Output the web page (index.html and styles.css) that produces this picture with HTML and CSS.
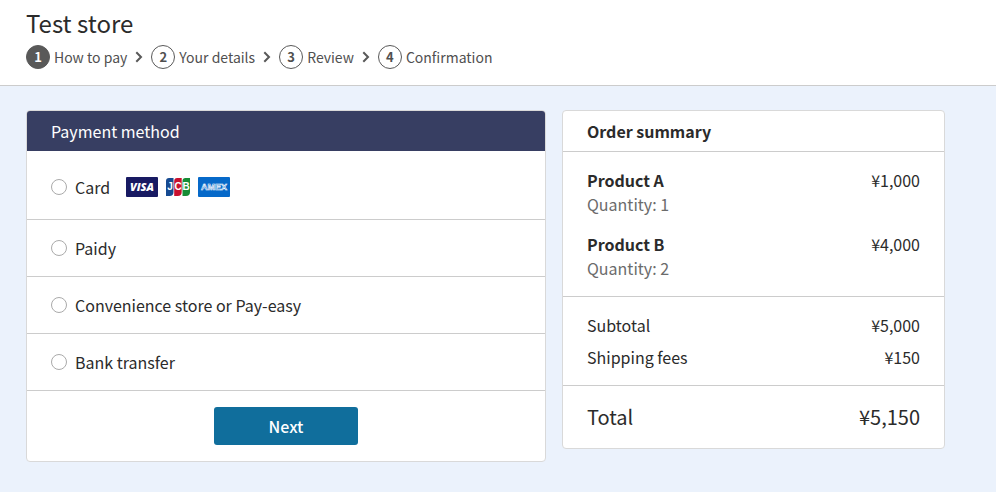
FILE: index.html
```html
<!DOCTYPE html>
<html lang="en">
<head>
<meta charset="utf-8">
<meta name="viewport" content="width=device-width, initial-scale=1">
<title>Test store</title>
<link rel="stylesheet" href="styles.css">
</head>
<body>
<header class="site-header">
  <h1 class="store-name">Test store</h1>
  <ol class="steps">
    <li class="step"><span class="step-number current">1</span><span class="step-label">How to pay</span>
      <svg class="chevron" viewBox="0 0 8 12"><path d="M1.3 1.3 6 6 1.3 10.7"/></svg></li>
    <li class="step"><span class="step-number">2</span><span class="step-label">Your details</span>
      <svg class="chevron" viewBox="0 0 8 12"><path d="M1.3 1.3 6 6 1.3 10.7"/></svg></li>
    <li class="step"><span class="step-number">3</span><span class="step-label">Review</span>
      <svg class="chevron" viewBox="0 0 8 12"><path d="M1.3 1.3 6 6 1.3 10.7"/></svg></li>
    <li class="step"><span class="step-number">4</span><span class="step-label">Confirmation</span></li>
  </ol>
</header>
<main class="checkout">
  <form class="panel">
    <h2 class="panel-title payment-title">Payment method</h2>
    <label class="option option-card"><input class="radio" type="radio" name="method"><span>Card</span>
      <span class="brands">
        <svg class="brand" viewBox="0 0 32 20" role="img" aria-label="Visa">
          <rect width="32" height="20" rx="1" fill="#181a62"/>
          <text class="visa-text" x="16" y="14" text-anchor="middle">VISA</text>
        </svg>
        <svg class="brand brand-jcb" viewBox="0 0 24 20" role="img" aria-label="JCB">
          <path d="M3 1h4.5v14a4 4 0 0 1-4 4H0V4a3 3 0 0 1 3-3z" fill="#164a91"/>
          <path d="M11.2 1h4.5v14a4 4 0 0 1-4 4H8.2V4a3 3 0 0 1 3-3z" fill="#c8102e"/>
          <path d="M19.5 1H24v14a4 4 0 0 1-4 4h-3.5V4a3 3 0 0 1 3-3z" fill="#168c35"/>
          <text class="jcb-text" x="4" y="13.4" text-anchor="middle">J</text>
          <text class="jcb-text" x="12" y="13.4" text-anchor="middle">C</text>
          <text class="jcb-text" x="20" y="13.4" text-anchor="middle">B</text>
        </svg>
        <svg class="brand" viewBox="0 0 32 20" role="img" aria-label="American Express">
          <rect width="32" height="20" rx="1" fill="#0669c9"/>
          <text class="amex-text" x="16" y="13" text-anchor="middle">AMEX</text>
        </svg>
      </span>
    </label>
    <label class="option"><input class="radio" type="radio" name="method"><span>Paidy</span></label>
    <label class="option"><input class="radio" type="radio" name="method"><span>Convenience store or Pay-easy</span></label>
    <label class="option"><input class="radio" type="radio" name="method"><span>Bank transfer</span></label>
    <div class="actions"><button class="next" type="button">Next</button></div>
  </form>
  <section class="panel">
    <h2 class="panel-title summary-title">Order summary</h2>
    <div class="group products">
      <div class="row"><div><h3 class="product-name">Product A</h3><p class="quantity">Quantity: 1</p></div><span>¥1,000</span></div>
      <div class="row"><div><h3 class="product-name">Product B</h3><p class="quantity">Quantity: 2</p></div><span>¥4,000</span></div>
    </div>
    <div class="group costs">
      <div class="row"><span>Subtotal</span><span>¥5,000</span></div>
      <div class="row"><span>Shipping fees</span><span>¥150</span></div>
    </div>
    <div class="group total">
      <div class="row"><span>Total</span><span>¥5,150</span></div>
    </div>
  </section>
</main>
</body>
</html>
```
FILE: styles.css
```css
* { box-sizing: border-box; }
body {
  margin: 0;
  min-height: 100vh;
  background: #ebf2fc;
  color: #2b2b2b;
  font: 400 16px/24px "Noto Sans CJK JP", "Noto Sans", sans-serif;
}
h1, h2, h3, p, ol { margin: 0; padding: 0; }
.site-header {
  background: #fff;
  border-bottom: 1px solid #ccc;
  padding: 8px 26px 16px;
}
.store-name { font-size: 24px; line-height: 30px; font-weight: 400; margin-bottom: 7px; }
.steps { display: flex; flex-wrap: wrap; gap: 8px; list-style: none; color: #505050; font-size: 14px; }
.step { display: flex; align-items: center; gap: 4px; }
.step-number {
  width: 24px;
  height: 24px;
  border: 1px solid #595959;
  border-radius: 50%;
  font-size: 13px;
  line-height: 22px;
  font-weight: 700;
  text-align: center;
}
.current { background: #595959; color: #fff; }
.chevron { width: 8px; height: 12px; margin-left: 4px; fill: none; stroke: #595959; stroke-width: 2; }
.checkout {
  display: grid;
  grid-template-columns: 520fr 383fr;
  gap: 16px;
  align-items: start;
  padding: 24px 51px 24px 26px;
}
.panel { background: #fff; border: 1px solid #d9d9d9; border-radius: 4px; overflow: hidden; }
.panel-title { font-size: 16px; line-height: 24px; padding: 8px 24px; }
.payment-title { background: #373e62; color: #fff; font-weight: 400; }
.summary-title { font-weight: 700; }
.option { display: flex; align-items: center; gap: 8px; padding: 16px 24px; border-bottom: 1px solid #ccc; }
.option-card { padding: 24px 24px 20px; }
.radio {
  appearance: none;
  width: 16px;
  height: 16px;
  margin: 0;
  border: 1px solid #aaa;
  border-radius: 50%;
  background: #fff;
}
.radio:checked { border: 5px solid #106e9c; }
.brands { display: flex; gap: 8px; margin-left: 8px; }
.brand { width: 32px; height: 20px; }
.brand-jcb { width: 24px; }
.visa-text { font: italic 800 11px "Open Sans", sans-serif; fill: #fff; }
.jcb-text { font: 700 10px "Liberation Sans", sans-serif; fill: #fff; }
.amex-text { font: 700 9px "Liberation Sans", sans-serif; fill: #0669c9; stroke: #fff; stroke-width: .6; }
.actions { display: flex; justify-content: center; padding: 16px; }
.next {
  width: 144px;
  border: 0;
  border-radius: 3px;
  padding: 7px 16px;
  background: #106e9c;
  color: #fff;
  font: inherit;
  font-weight: 500;
}
.group { border-top: 1px solid #ccc; padding: 16px 24px; display: grid; }
.products { gap: 16px; }
.costs { gap: 8px; }
.row { display: flex; justify-content: space-between; }
.product-name { font-size: 16px; font-weight: 700; }
.quantity { color: #6b6b6b; }
.total { font-size: 20px; line-height: 30px; }
```
